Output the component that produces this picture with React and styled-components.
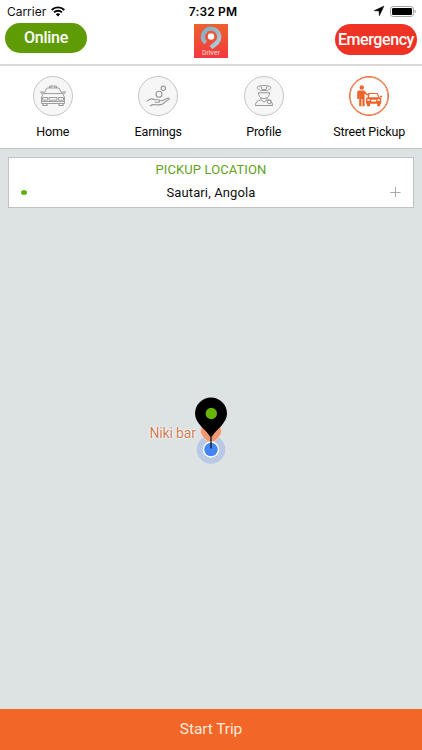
import React from "react";
import styled, { createGlobalStyle } from "styled-components";

const GlobalStyle = createGlobalStyle`
  * { box-sizing: border-box; }
  body { margin: 0; font-family: Roboto, "Liberation Sans", sans-serif; background: #fff; }
  svg { display: block; overflow: visible; }
`;

const Screen = styled.div`
  width: 422px;
  height: 750px;
  display: flex;
  flex-direction: column;
  overflow: hidden;
  background: #fff;
`;

const StatusBar = styled.div`
  height: 22px;
  flex: none;
  display: grid;
  grid-template-columns: 1fr auto 1fr;
  align-items: center;
  padding: 0 6px 0 7px;
  font-family: Inter, sans-serif;
  font-size: 12px;
  color: #111;
`;

const StatusGroup = styled.div`
  display: flex;
  align-items: center;
  gap: ${(p) => (p.$end ? "6px" : "5px")};
  justify-content: ${(p) => (p.$end ? "flex-end" : "flex-start")};
  letter-spacing: -0.03px;
`;

const Clock = styled.div`
  font-weight: 600;
  font-size: 12px;
  letter-spacing: 0.15px;
  padding-left: 3px;
  color: #000;
`;

const Header = styled.header`
  height: 44px;
  flex: none;
  display: grid;
  grid-template-columns: 1fr 34px 1fr;
  align-items: start;
  padding: 1px 5px 0 5px;
  border-bottom: 2px solid #dadada;
`;

const Pill = styled.button`
  width: 82px;
  height: ${(p) => (p.$danger ? 31 : 30)}px;
  margin-top: ${(p) => (p.$danger ? 1 : 0)}px;
  justify-self: ${(p) => (p.$danger ? "end" : "start")};
  padding: ${(p) => (p.$danger ? "1px 0 0" : "0")};
  border: 0;
  border-radius: 16px;
  display: flex;
  align-items: center;
  justify-content: center;
  background: ${(p) => (p.$danger ? "#ee3224" : "#5f9b04")};
  color: #fff;
  font-family: inherit;
  font-size: 16px;
  line-height: 20px;
  font-weight: 500;
  white-space: nowrap;
  letter-spacing: ${(p) => (p.$danger ? "-0.42px" : "-0.25px")};
`;

const Logo = styled.div`
  margin-top: 1px;
  width: 34px;
  height: 34px;
`;

const Tabs = styled.nav`
  height: 83px;
  flex: none;
  display: grid;
  grid-template-columns: repeat(4, 1fr);
  border-bottom: 1px solid #c3c5c5;
  padding-top: 10px;
`;

const Tab = styled.div`
  display: flex;
  flex-direction: column;
  align-items: center;
  gap: 7px;
  font-size: 12.5px;
  line-height: 17px;
  color: #080808;
  white-space: nowrap;
  letter-spacing: -0.15px;
`;

const IconRing = styled.div`
  width: 40px;
  height: 40px;
  border-radius: 50%;
  border: 1px solid ${(p) => (p.$active ? "#e86a35" : "#c8c5c2")};
  box-shadow: ${(p) => (p.$active ? "inset 0 0 0 0.5px #e86a35" : "none")};
  background: ${(p) => (p.$active ? "#fff" : "#f6f6f6")};
  color: ${(p) => (p.$active ? "#ec632b" : "#969696")};
  display: flex;
  align-items: center;
  justify-content: center;
`;

const MapArea = styled.main`
  flex: 1;
  position: relative;
  background: #dde2e2;
  padding: 8px 8px 0;
`;

const LocationCard = styled.section`
  height: 51px;
  background: #fff;
  border: 1px solid #bfc2c3;
  display: flex;
  flex-direction: column;
  align-items: center;
`;

const CardTitle = styled.div`
  height: 23px;
  line-height: 24px;
  font-size: 13px;
  color: #64a11f;
  letter-spacing: 0.1px;
`;

const AddressRow = styled.div`
  align-self: stretch;
  display: grid;
  grid-template-columns: 15px 1fr 17px;
  align-items: center;
  height: 22px;
  padding-left: 12px;
  padding-right: 7px;
`;

const StatusDot = styled.span`
  width: 6px;
  height: 5px;
  border-radius: 50%;
  background: #61ad12;
`;

const Address = styled.div`
  text-align: center;
  font-size: 13px;
  color: #101010;
  letter-spacing: 0.12px;
  padding-right: 3px;
`;

const PlaceLabel = styled.div`
  position: absolute;
  left: 149.5px;
  top: 275px;
  font-size: 14px;
  line-height: 18px;
  color: #cf7d55;
  white-space: nowrap;
  letter-spacing: -0.15px;
  text-shadow: 0 0 2px #fff, 0 0 2px #fff, 0 0 1px #fff;
`;

const Pin = styled.div`
  position: absolute;
  left: 191px;
  top: 246px;
`;

const StartButton = styled.button`
  height: 41px;
  flex: none;
  border: 0;
  padding: 0 0 1px;
  background: #f26627;
  color: #ffeadb;
  font-family: inherit;
  font-size: 15.5px;
  letter-spacing: -0.1px;
`;

const Wifi = () => (
  <svg width="14" height="11" viewBox="0 0 14 11" fill="none" stroke="#000" strokeWidth="1.9">
    <path d="M.7 4a8.9 8.9 0 0 1 12.6 0" />
    <path d="M3 6.4a5.7 5.7 0 0 1 8 0" />
    <path d="M7 10.5 4.8 8.2a3.2 3.2 0 0 1 4.4 0Z" fill="#000" stroke="none" />
  </svg>
);

const LocationArrow = () => (
  <svg width="10" height="10" viewBox="0 0 10 10">
    <path d="M10 0 0 4.7 5 5l.3 5Z" fill="#000" stroke="#000" strokeWidth=".4" strokeLinejoin="round" />
  </svg>
);

const Battery = () => (
  <svg width="26" height="11" viewBox="0 0 26 11">
    <rect x=".5" y=".5" width="23" height="10" rx="2.7" fill="#fff" stroke="#a3a3a3" />
    <rect x="2" y="2" width="20" height="7" rx="1.2" fill="#000" />
    <path d="M24.7 3.8c1.5.4 1.5 3 0 3.4Z" fill="#999" />
  </svg>
);

const DriverLogo = () => (
  <svg width="34" height="34" viewBox="0 0 34 34">
    <defs>
      <linearGradient id="logoBg" x1="0" y1="0" x2="0" y2="1">
        <stop offset="0" stopColor="#ed622e" />
        <stop offset="1" stopColor="#f3383f" />
      </linearGradient>
      <linearGradient id="logoRing" x1="0" y1="0" x2="1" y2="1">
        <stop offset="0" stopColor="#7bb2cd" />
        <stop offset=".6" stopColor="#a4b7c2" />
        <stop offset="1" stopColor="#a9dce9" />
      </linearGradient>
    </defs>
    <rect width="34" height="34" fill="url(#logoBg)" />
    <path d="M11.6 18.9A8.2 8.2 0 1 1 23.3 18.1L17 23.7" fill="none" stroke="url(#logoRing)" strokeWidth="4.4" />
    <circle cx="17" cy="12.5" r="3.2" fill="#fff" />
    <text x="17" y="31" textAnchor="middle" fontFamily="Roboto, sans-serif" fontSize="6.8" letterSpacing=".1" fill="#ffe3db">Driver</text>
  </svg>
);

const TaxiIcon = () => (
  <svg width="28" height="24" viewBox="0 0 28 24" fill="none" stroke="currentColor" strokeWidth=".9" strokeLinejoin="round">
    <path d="M10.5 4V2h7v2M12 2v2m4-2v2M5 9.5 8 4h12l3 5.5Z" />
    <path d="M1.5 7.8h2.7v2H2.6ZM26.5 7.8h-2.7v2h1.6Z" />
    <path d="M4.2 10.2 2.5 13v6.5h23V13l-1.7-2.8M2.5 17.5h23M3.5 13.500h5.300l-.5 2.700H3.500ZM24.500 13.500h-5.300l.5 2.700h4.800ZM10 13.500h8v2.700h-8Z" />
    <path d="M4 19.500v2h4v-2m12 0v2h4v-2" strokeWidth="1.200" />
  </svg>
);

const EarningsIcon = () => (
  <svg width="26" height="24" viewBox="0 0 26 24" fill="none" stroke="currentColor" strokeWidth="1.100" strokeLinejoin="round">
    <circle cx="18.300" cy="4.300" r="2.200" />
    <circle cx="14" cy="10.200" r="3" />
    <path d="M1.800 17.300c3-3 5.200-3.100 7.800-1.500h4c1.700.2 1.300 2.400-.2 2.400H9.700M14.500 16.700h2.700l5.400-2.500c1.700-.6 2.200.6 1 1.400L17.500 20c-2 1.300-4.300 1-6.800.7-3-.3-4.200.2-5.700 1.300" />
  </svg>
);

const ProfileIcon = () => (
  <svg width="22" height="26" viewBox="0 0 22 26" fill="none" stroke="currentColor" strokeWidth="1" strokeLinejoin="round">
    <path d="M4.300 4.200c2-2.200 11.400-2.200 13.400 0 .3 1.700-2.200 2.300-3 3.400H7.300C6.500 6.500 4 5.900 4.300 4.200ZM8 3.400l1 3.200h4l1-3.200" />
    <path d="M5.500 9.800h11c0 4-2.500 5.700-5.500 5.700s-5.500-1.700-5.500-5.700Z" />
    <path d="M8 14.800v2l3 2.300 3-2.300v-2M7.500 17C4 17.500 2.700 19 2.500 22.500h17c-.2-3.500-1.500-5-5-5.500" />
    <circle cx="16.300" cy="18.700" r="2" />
  </svg>
);

const PickupIcon = () => (
  <svg width="28" height="24" viewBox="0 0 28 24" fill="currentColor">
    <circle cx="6.800" cy="3.500" r="2.200" />
    <path d="M4 6.500h5.200l3 3.200 3.200.8-.3 1.400-3.900-.9-1.600-1.400V22.300H7.400v-7.200h-.9v7.200H4.200V10.200l-.2 4.700H2.200V8.700c0-1.300.6-2.200 1.800-2.200Z" />
    <path d="M13.300 8.900h9.200l2.200 4.500 1.500.7v5.700H10.900v-5.700l1.700-.7Z" />
    <path d="M14.500 9.900h7.300l1.600 3.400h-9.500Z" fill="#fff" />
    <path d="M12 19h3v3.300h-3Zm10.200 0h3v3.300h-3ZM25 11.700h2.200v1.500H25Z" />
    <path d="M12.200 15.200h2.600v1.600h-2.600Zm10.200 0H25v1.600h-2.600ZM16 15.800h5.200v1.700H16Z" fill="#fff" />
  </svg>
);

const PlusIcon = () => (
  <svg width="12" height="12" viewBox="0 0 12 12" stroke="#aaa" strokeWidth="1">
    <path d="M6.500 .8v10.400M1.200 6.500h10.400" />
  </svg>
);

const MapPin = () => (
  <svg width="40" height="72" viewBox="0 0 40 72">
    <circle cx="20" cy="54.500" r="14.300" fill="#b8c9e5" />
    <path d="M9.500 36a10.500 10.500 0 0 1 21 0c0 5-5.300 8.500-7 11h-7c-1.700-2.500-7-6-7-11Z" fill="#ef9871" stroke="#f4d5c7" strokeWidth="1" />
    <circle cx="20" cy="54.500" r="8.200" fill="#fff" />
    <circle cx="20" cy="54.500" r="6.800" fill="#4285f4" />
    <path d="M4 18.500a16 16 0 0 1 32 0C36 28.500 25 34.500 21 41.500h-2C15 34.500 4 28.500 4 18.500Z" fill="#000" />
    <path d="M20 39v14.500" stroke="#101820" strokeWidth="1.300" />
    <circle cx="20.300" cy="18.500" r="5.700" fill="#68b500" />
  </svg>
);

const tabs = [
  { label: "Home", icon: <TaxiIcon /> },
  { label: "Earnings", icon: <EarningsIcon /> },
  { label: "Profile", icon: <ProfileIcon /> },
  { label: "Street Pickup", icon: <PickupIcon />, active: true },
];

export default function App() {
  return (
    <Screen>
      <GlobalStyle />
      <StatusBar>
        <StatusGroup>Carrier<Wifi /></StatusGroup>
        <Clock>7:32 PM</Clock>
        <StatusGroup $end><LocationArrow /><Battery /></StatusGroup>
      </StatusBar>
      <Header>
        <Pill>Online</Pill>
        <Logo><DriverLogo /></Logo>
        <Pill $danger>Emergency</Pill>
      </Header>
      <Tabs>
        {tabs.map((tab) => (
          <Tab key={tab.label}>
            <IconRing $active={tab.active}>{tab.icon}</IconRing>
            {tab.label}
          </Tab>
        ))}
      </Tabs>
      <MapArea>
        <LocationCard>
          <CardTitle>PICKUP LOCATION</CardTitle>
          <AddressRow>
            <StatusDot />
            <Address>Sautari, Angola</Address>
            <PlusIcon />
          </AddressRow>
        </LocationCard>
        <PlaceLabel>Niki bar</PlaceLabel>
        <Pin><MapPin /></Pin>
      </MapArea>
      <StartButton>Start Trip</StartButton>
    </Screen>
  );
}
